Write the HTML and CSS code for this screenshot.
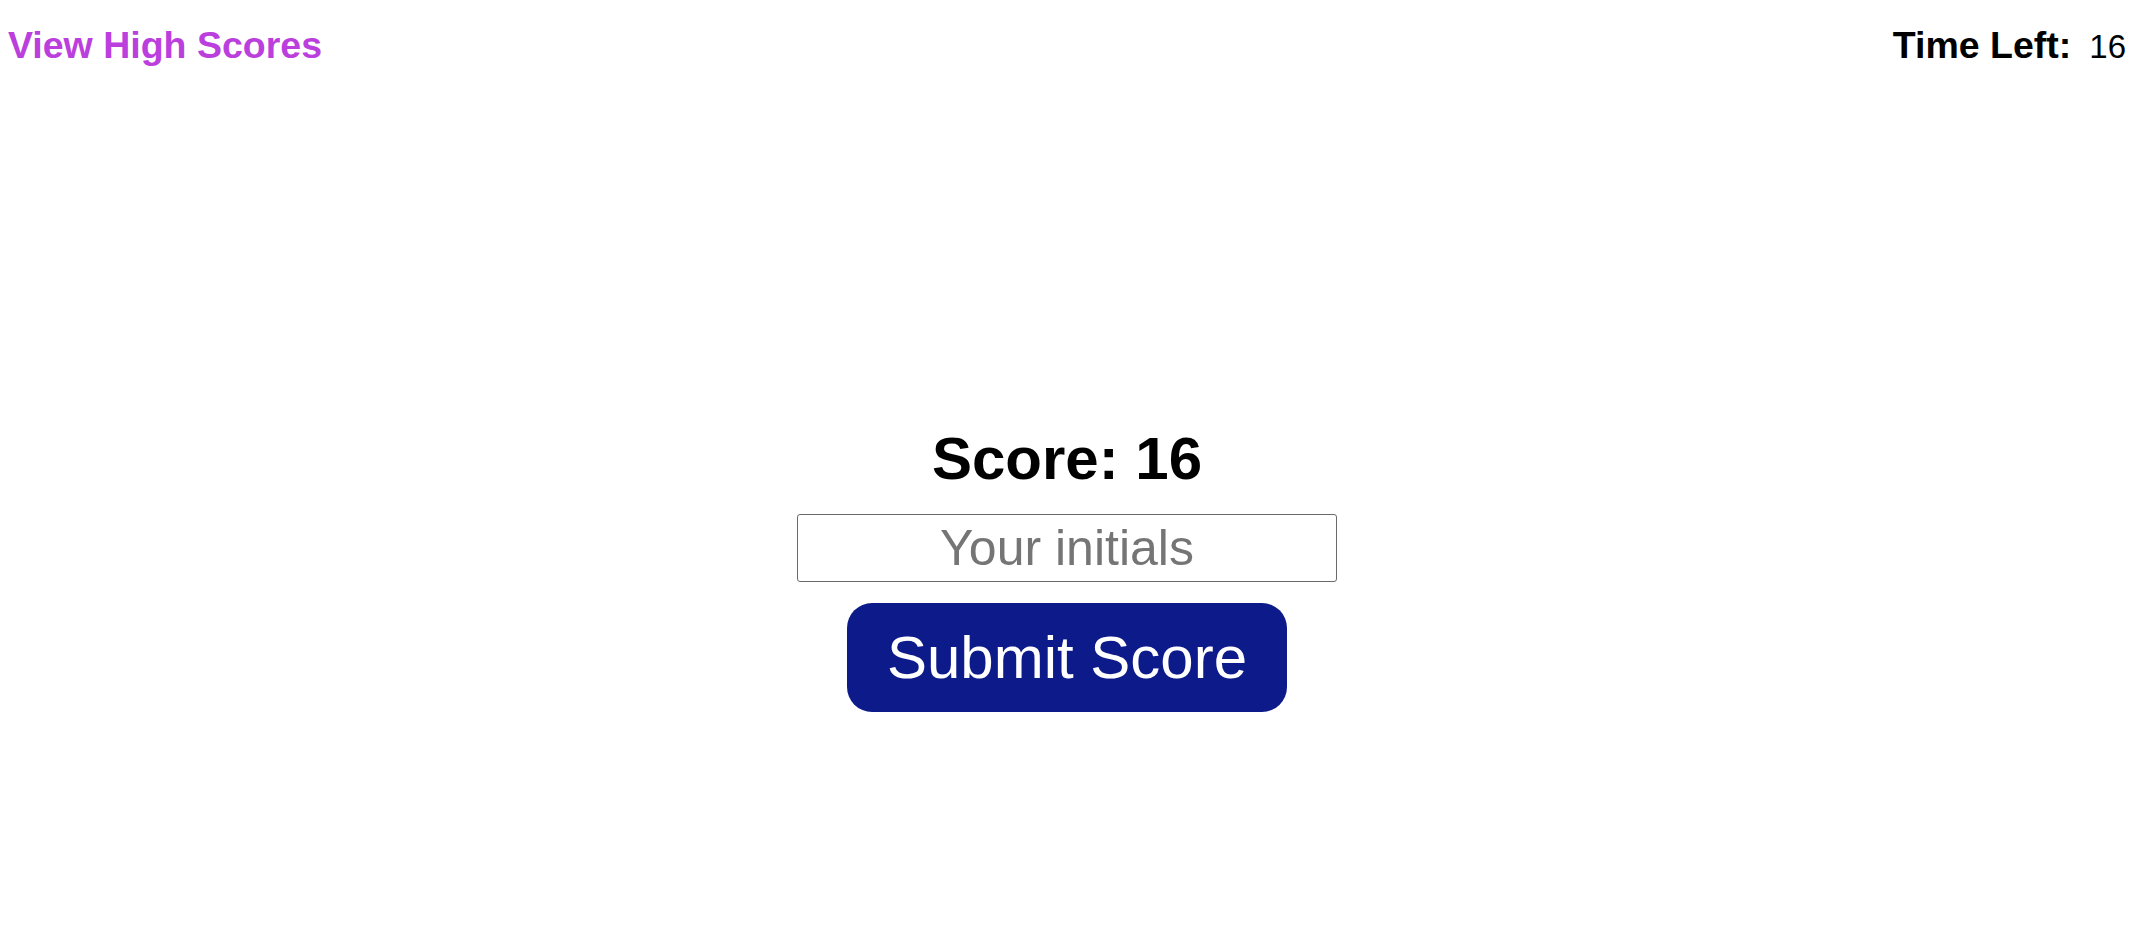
FILE: index.html
```html
<!DOCTYPE html>
<html lang="en">
<head>
<meta charset="utf-8">
<title>Quiz</title>
<link rel="stylesheet" href="styles.css">
</head>
<body>
<header class="topbar">
  <a class="highscores" href="#">View High Scores</a>
  <div class="timer"><span class="timer-label">Time Left:</span><span class="timer-value">16</span></div>
</header>
<main class="final">
  <h1 class="score">Score: 16</h1>
  <input class="initials" type="text" placeholder="Your initials">
  <button class="submit" type="button">Submit Score</button>
</main>
</body>
</html>
```

FILE: styles.css
```css
html, body {
  background: #ffffff;
}
body {
  margin: 8px;
  font-family: "Liberation Sans", Arial, Helvetica, sans-serif;
  color: #000;
}
.topbar {
  display: flex;
  justify-content: space-between;
  align-items: baseline;
  padding-top: 16px;
}
.highscores {
  font-size: 37.5px;
  line-height: 43px;
  font-weight: bold;
  color: #bb3fdd;
  text-decoration: none;
}
.timer {
  display: flex;
  align-items: baseline;
  gap: 18px;
  line-height: 43px;
}
.timer-label {
  font-size: 37.5px;
  font-weight: bold;
}
.timer-value {
  font-size: 33px;
}
.final {
  display: flex;
  flex-direction: column;
  align-items: center;
  padding-top: 356px;
}
.score {
  margin: 0;
  font-size: 60px;
  line-height: 69px;
  font-weight: bold;
}
.initials {
  margin-top: 21px;
  box-sizing: border-box;
  width: 540px;
  height: 68px;
  padding: 0 4px;
  border: 1px solid #6a6a6a;
  border-radius: 3px;
  font-family: "Liberation Sans", Arial, Helvetica, sans-serif;
  font-size: 50px;
  text-align: center;
  color: #000;
  background: #fff;
}
.initials::placeholder {
  color: #757575;
}
.submit {
  margin-top: 21px;
  box-sizing: border-box;
  width: 440px;
  height: 109px;
  padding: 0;
  border: none;
  border-radius: 25px;
  background: #0d1a8a;
  color: #ffffff;
  font-family: "Liberation Sans", Arial, Helvetica, sans-serif;
  font-size: 60px;
  line-height: 69px;
  white-space: nowrap;
}
```
